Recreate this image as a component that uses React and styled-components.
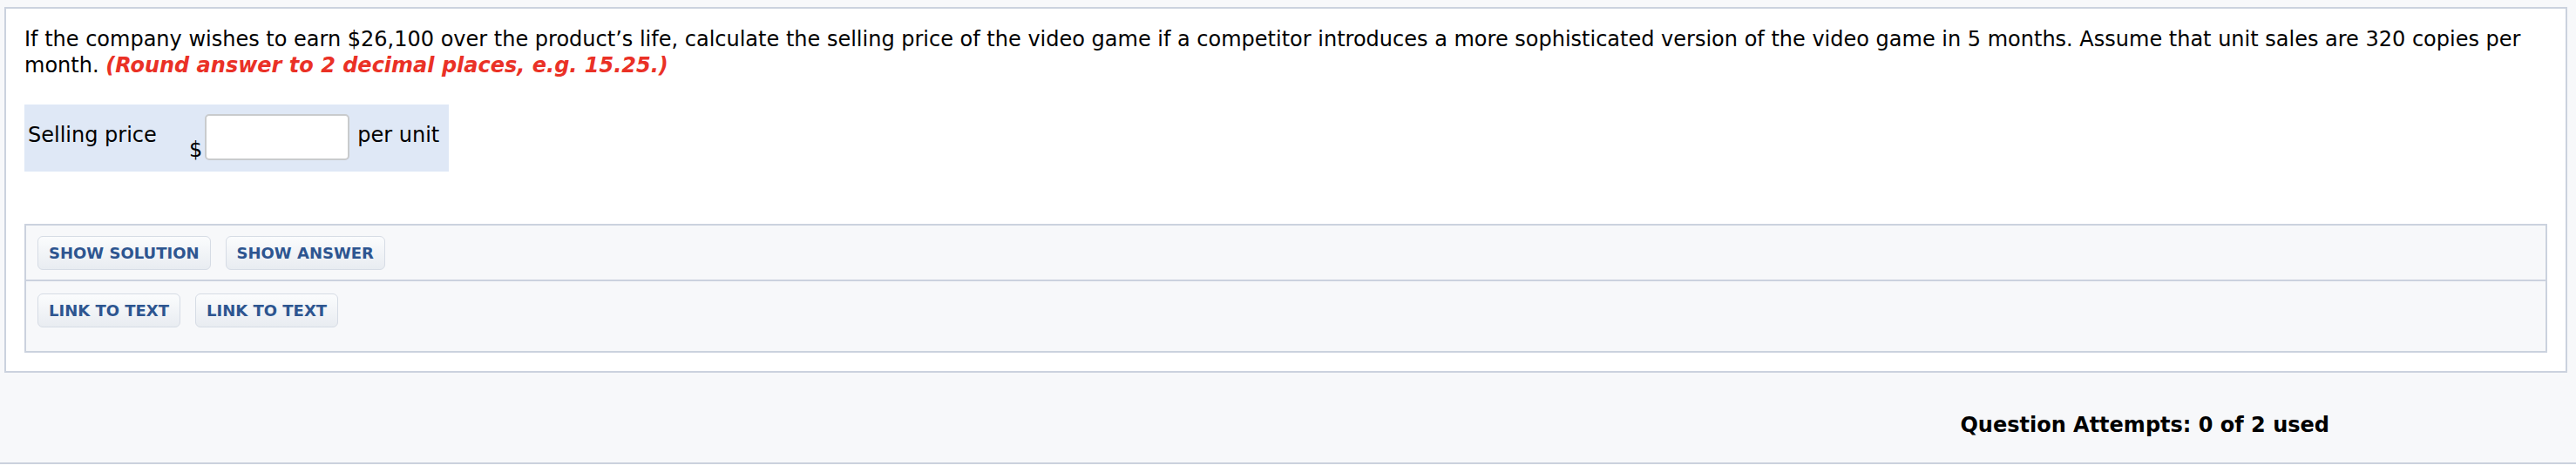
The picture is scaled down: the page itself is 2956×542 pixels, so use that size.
import React from 'react';
import styled, { createGlobalStyle } from 'styled-components';

const GlobalStyle = createGlobalStyle`
    body{
        margin: 0;
        background: #fff;
        font-family: "DejaVu Sans", Verdana, sans-serif;
    }
`;

const Page = styled.div`
    width: 2956px;
    box-sizing: border-box;
    background: #f7f8fa;
    padding-top: 8px;
    border-bottom: 2px solid #cbd1dd;
`;

const QuestionBox = styled.div`
    margin: 0 10px 0 5px;
    background: #fff;
    border: 2px solid #cbd2de;
    padding: 20px 21px 21px 21px;
`;

const Prompt = styled.p`
    margin: 0 -14px 0 0;
    font-size: 24px;
    line-height: 30px;
    color: #000;
`;

const Hint = styled.em`
    color: #ea3126;
    font-weight: bold;
`;

const AnswerRow = styled.div`
    display: inline-flex;
    align-items: flex-start;
    margin-top: 30px;
    padding: 11px 11px 13px 4px;
    background: #dfe8f6;
    font-size: 24px;
    line-height: 30px;
`;

const Label = styled.span`
    margin-top: 9px;
    width: 185px;
`;

const Dollar = styled.span`
    align-self: flex-end;
    margin-right: 3px;
    line-height: 1;
`;

const Field = styled.input`
    width: 166px;
    height: 53px;
    box-sizing: border-box;
    border: 2px solid #c9cbcd;
    border-radius: 5px;
    background: #fff;
    margin: 0 9px 0 0;
`;

const Unit = styled.span`
    margin-top: 9px;
`;

const ActionPanel = styled.div`
    margin-top: 60px;
    border: 2px solid #cbd2de;
    background: #f7f8fa;
`;

const ActionRow = styled.div`
    display: flex;
    gap: 17px;
    padding: ${p => p.$last ? '14px 13px 27px' : '12px 13px 11px'};
    & + & {
        border-top: 2px solid #cbd2de;
    }
`;

const Button = styled.button`
    height: 39px;
    padding: 0 12px;
    border: 1px solid #d6dce5;
    border-radius: 6px;
    background: linear-gradient(#fbfcfd, #e8ecf1);
    color: #2d5590;
    font-family: "DejaVu Sans", Verdana, sans-serif;
    font-weight: bold;
    font-size: 18px;
    text-transform: uppercase;
    cursor: pointer;
`;

const Footer = styled.div`
    display: flex;
    justify-content: flex-end;
    padding: 45px 283px 28px 0;
    font-size: 24px;
    line-height: 30px;
    font-weight: bold;
    color: #000;
`;

function App(){
    return (
        <>
            <GlobalStyle />
            <Page>
                <QuestionBox>
                    <Prompt>
                        If the company wishes to earn $26,100 over the product’s life, calculate the selling price of the video game if a competitor introduces a more sophisticated version of the video game in 5 months. Assume that unit sales are 320 copies per month. <Hint>(Round answer to 2 decimal places, e.g. 15.25.)</Hint>
                    </Prompt>
                    <AnswerRow>
                        <Label>Selling price</Label>
                        <Dollar>$</Dollar>
                        <Field type="text" />
                        <Unit>per unit</Unit>
                    </AnswerRow>
                    <ActionPanel>
                        <ActionRow>
                            <Button>Show Solution</Button>
                            <Button>Show Answer</Button>
                        </ActionRow>
                        <ActionRow $last>
                            <Button>Link to Text</Button>
                            <Button>Link to Text</Button>
                        </ActionRow>
                    </ActionPanel>
                </QuestionBox>
                <Footer>Question Attempts: 0 of 2 used</Footer>
            </Page>
        </>
    )
}

export default App;
